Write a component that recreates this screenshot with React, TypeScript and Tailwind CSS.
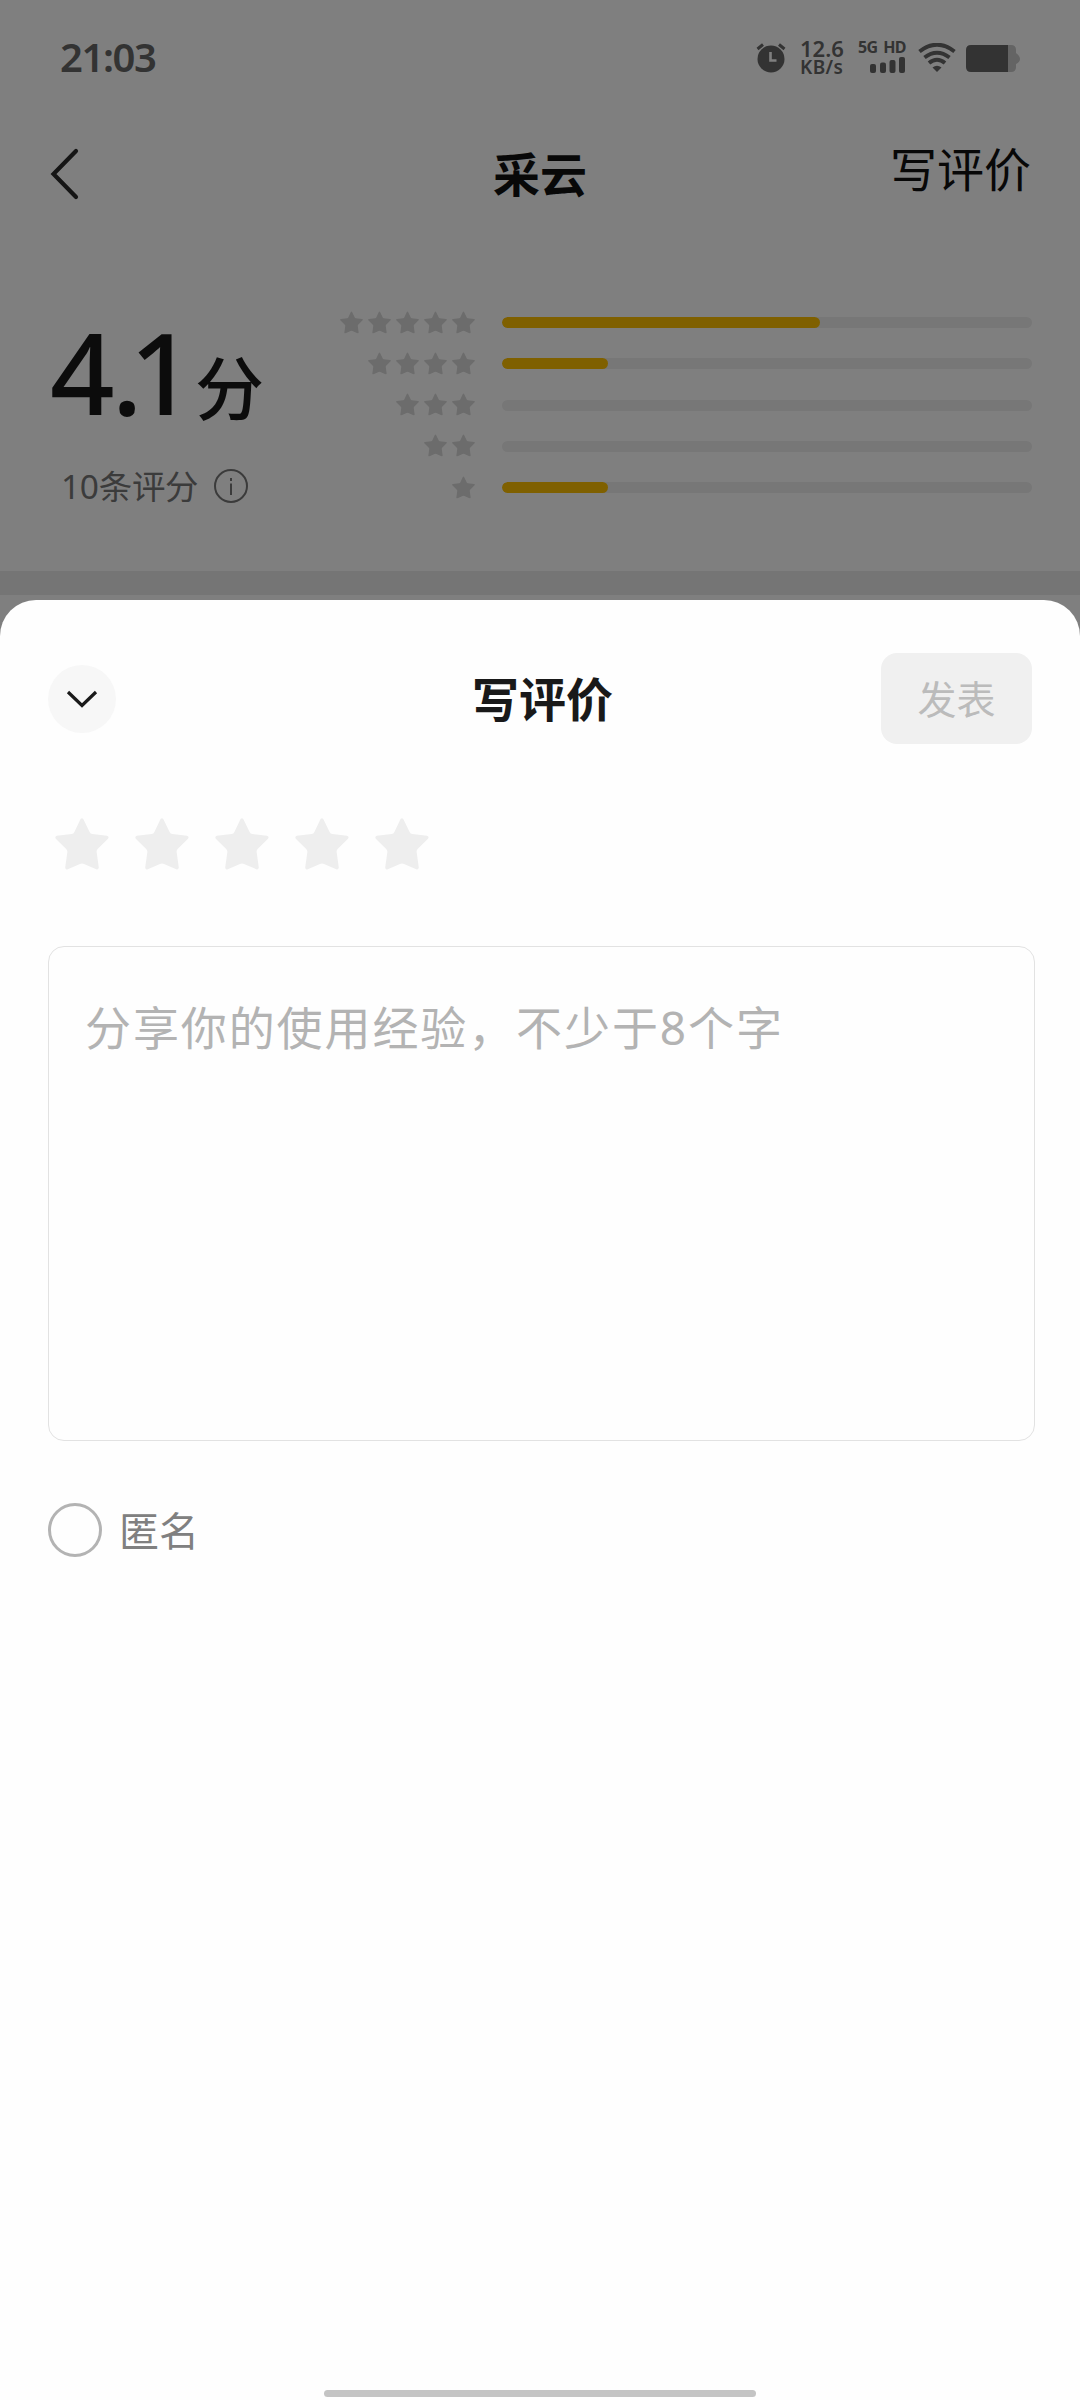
import { useState } from 'react';

const ratings = [
  { stars: 5, percent: 60 },
  { stars: 4, percent: 20 },
  { stars: 3, percent: 0 },
  { stars: 2, percent: 0 },
  { stars: 1, percent: 20 },
];

function Star({ className }: { className: string }) {
  return (
    <svg viewBox="0 0 54 52" className={className} fill="currentColor">
      <path d="M25.4 1.2Q27 -.6 28.4 1.2L34.6 14Q35.4 15.8 37.4 16.1L52 17.8Q54.6 18.6 53 20.8L42.6 31Q41.4 32.4 41.7 34.4L43.8 49.6Q43.6 52 41.2 51.2L29 45.9Q27 45 25 45.9L12.8 51.2Q10.2 52 10.2 49.4L12.3 34.4Q12.6 32.4 11.2 31L.8 20.8Q-.6 18.6 1.8 17.8L16.6 16.1Q18.6 15.8 19.4 14Z" />
    </svg>
  );
}

function StatusBar() {
  return (
    <div className="flex h-[116px] items-start justify-between pl-[60px] pr-[60px] font-['Noto_Sans',sans-serif] text-[#666]">
      <span className="mt-[28px] text-[40px] leading-[58px] font-semibold tracking-[-1.4px]">21:03</span>
      <div className="flex pt-[40px]">
        <svg viewBox="0 0 30 30" className="mt-[3px] h-[30px] w-[30px]">
          <circle cx="15" cy="16" r="13.5" fill="currentColor" />
          <path d="M1.5 6L7 1.5M28.5 6L23 1.5" stroke="currentColor" strokeWidth="3" />
          <path d="M14.5 9v8.5h6" stroke="#fff" strokeWidth="2.6" fill="none" />
        </svg>
        <div className="ml-[14px] flex w-[44px] flex-col font-semibold">
          <span className="h-[19px] text-[22px] leading-[16px]">12.6</span>
          <span className="h-[19px] text-[19px] leading-[17px] tracking-[0.4px]">KB/s</span>
        </div>
        <div className="ml-[14px] flex w-[50px] flex-col">
          <div className="flex h-[17px] justify-between pr-[2px] text-[16px] leading-[14px] font-bold tracking-[-0.6px]">
            <span>5G</span>
            <span>HD</span>
          </div>
          <svg viewBox="0 0 36 16" className="ml-[12px] h-[16px] w-[36px]" fill="currentColor">
            <rect x="0" y="7" width="6" height="9" rx="2" />
            <rect x="10" y="5.5" width="6" height="10.5" rx="2" />
            <rect x="19.5" y="3" width="6" height="13" rx="2" />
            <rect x="29" y="0" width="6" height="16" rx="2" />
          </svg>
        </div>
        <svg viewBox="0 0 38 30" className="ml-[10px] mt-[3px] h-[30px] w-[38px]" fill="none" stroke="currentColor">
          <path d="M1.5 8.5Q19 -5 36.5 8.5" strokeWidth="4" />
          <path d="M6.5 14.5Q19 5 31.5 14.5" strokeWidth="4" />
          <path d="M11 20Q19 13.5 27 20" strokeWidth="4" />
          <path d="M14.5 24.5Q19 21 23.5 24.5L19 29Z" fill="currentColor" stroke="none" />
        </svg>
        <svg viewBox="0 0 54 28" className="ml-[10px] mt-[5px] h-[28px] w-[54px]">
          <path d="M42 0H45Q50 0 50 5V8Q54 11 54 14T50 19V22Q50 27 45 27H42Z" fill="#c8c8c8" />
          <path d="M5 0H42V27H5Q0 27 0 22V5Q0 0 5 0Z" fill="currentColor" />
        </svg>
      </div>
    </div>
  );
}

function RatingPage() {
  return (
    <div className="h-[640px] bg-white">
      <StatusBar />
      <header className="grid h-[116px] grid-cols-3 items-center pl-[49px] pr-[49px]">
        <svg viewBox="0 0 30 52" className="h-[52px] w-[30px]" fill="none" stroke="#2a2a2a" strokeWidth="4.2" strokeLinecap="round">
          <path d="M27 3L4.5 26L27 49" />
        </svg>
        <h1 className="mb-[4px] text-center text-[47px] leading-[60px] font-bold text-[#111]">采云</h1>
        <span className="mb-[14px] text-right text-[47px] leading-[60px] text-[#111]">写评价</span>
      </header>

      <section className="flex h-[339px] px-[48px] pt-[78px]">
        <div className="w-[280px]">
          <div className="flex h-[117px] items-baseline pt-[3px] text-[#181818]">
            <span className="w-[147px] pl-[2px] font-['Noto_Sans',sans-serif] text-[113px] leading-[116px] font-medium">
              <span className="tracking-[-3px]">4</span>
              <span className="tracking-[-13px]">.</span>1
            </span>
            <span className="text-[69px] leading-[116px] font-medium">分</span>
          </div>
          <div className="mt-[33px] flex h-[52px] items-center pl-[13px] text-[#777]">
            <span className="w-[137px] font-['Noto_Sans','Noto_Sans_CJK_SC',sans-serif] text-[33.5px] leading-[50px] whitespace-nowrap tracking-[-0.3px]">10条评分</span>
            <svg viewBox="0 0 34 34" className="ml-[16px] h-[34px] w-[34px]" fill="none" stroke="currentColor" strokeWidth="2">
              <circle cx="17" cy="17" r="16" />
              <path d="M17 14.5V26M17 9v3" />
            </svg>
          </div>
        </div>

        {/* Rating distribution */}
        <div className="flex flex-1 flex-col">
          {ratings.map((row) => (
            <div key={row.stars} className="flex h-[41.3px] items-start">
              <div className="flex w-[147px] justify-end gap-[5px] pt-[0.5px] text-[#d8d8d8]">
                {Array.from({ length: row.stars }, (_, i) => (
                  <Star key={i} className="h-[23px] w-[23px]" />
                ))}
              </div>
              <div className="ml-[27px] mt-[7px] h-[11px] w-[530px] overflow-hidden rounded-full bg-[#eee]">
                <div className="h-full rounded-full bg-[#ffc000]" style={{ width: `${row.percent}%` }} />
              </div>
            </div>
          ))}
        </div>
      </section>

      <div className="h-[24px] bg-[#ebebeb]" />
    </div>
  );
}

export default function App() {
  const [score, setScore] = useState(0);
  const [content, setContent] = useState('');
  const [anonymous, setAnonymous] = useState(false);

  return (
    <div className="relative h-[2400px] w-[1080px] overflow-hidden bg-white font-['Noto_Sans_CJK_SC',sans-serif]">
      <RatingPage />
      <div className="absolute inset-0 bg-black/50" />

      {/* Review sheet */}
      <div className="absolute inset-x-0 bottom-0 flex h-[1800px] flex-col rounded-t-[36px] bg-[#fefefe] px-[48px] pt-[53px]">
        <div className="grid h-[91px] grid-cols-[152px_1fr_151px] items-center">
          <button className="flex h-[68px] w-[68px] items-center justify-center rounded-full bg-[#f7f7f7]">
            <svg viewBox="0 0 32 18" className="h-[18px] w-[32px]" fill="none" stroke="#1a1a1a" strokeWidth="3.2">
              <path d="M2 2L16 15.5L30 2" />
            </svg>
          </button>
          <h2 className="mb-[4px] pl-[4px] text-center text-[47px] leading-[60px] font-bold text-[#191919]">写评价</h2>
          <button className="h-[91px] rounded-[16px] bg-[#f0f0f0] pb-[3px] text-[39px] text-[#bbb]">发表</button>
        </div>

        <div className="mt-[74px] flex gap-[26px] pl-[7px]">
          {[1, 2, 3, 4, 5].map((n) => (
            <button key={n} onClick={() => setScore(n)}>
              <Star className={n <= score ? 'h-[52px] w-[54px] text-[#ffc000]' : 'h-[52px] w-[54px] text-[#eee]'} />
            </button>
          ))}
        </div>

        <textarea
          className="mt-[76px] h-[495px] w-[987px] resize-none rounded-[16px] border-[1.5px] border-[#e2e2e2] px-[36px] pt-[46px] font-['Noto_Sans','Noto_Sans_CJK_SC',sans-serif] text-[46px] leading-[68px] tracking-[1.9px] outline-none placeholder:text-[#b3b3b3]"
          placeholder="分享你的使用经验，不少于8个字"
          value={content}
          onChange={(e) => setContent(e.target.value)}
        />

        <label className="mt-[62px] flex h-[54px] items-center">
          <input
            type="checkbox"
            className="h-[54px] w-[54px] appearance-none rounded-full border-[3px] border-[#b3b3b3] checked:bg-[#ffc000]"
            checked={anonymous}
            onChange={(e) => setAnonymous(e.target.checked)}
          />
          <span className="mb-[3px] ml-[17px] text-[40px] leading-[54px] text-[#808080]">匿名</span>
        </label>

        <div className="mx-auto mb-[3px] mt-auto h-[7px] w-[432px] rounded-full bg-[#c4c4c4]" />
      </div>
    </div>
  );
}
